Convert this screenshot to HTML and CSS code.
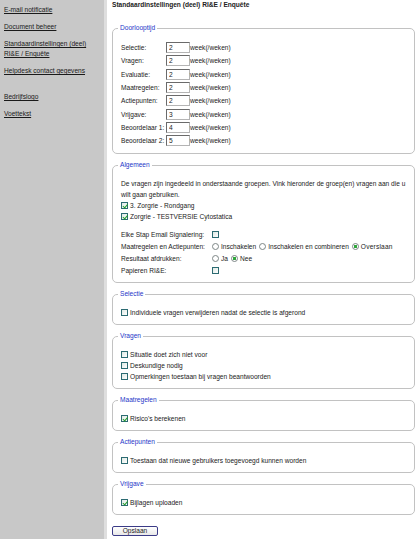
FILE: index.html
```html
<!DOCTYPE html>
<html lang="nl">
<head>
  <meta charset="UTF-8">
  <title>Standaardinstellingen (deel) RI&amp;E / Enquête</title>
  <link rel="stylesheet" href="styles.css">
</head>
<body>
  <div class="page">

    <!-- Menu links -->
    <nav class="sidebar">
      <a href="#">E-mail notificatie</a>
      <a href="#">Document beheer</a>
      <a href="#">Standaardinstellingen (deel) RI&amp;E / Enquête</a>
      <a href="#">Helpdesk contact gegevens</a>
      <a href="#" class="spaced">Bedrijfslogo</a>
      <a href="#">Voettekst</a>
    </nav>

    <main class="content">
      <h1 class="title">Standaardinstellingen (deel) RI&amp;E / Enquête</h1>

      <form>
        <fieldset class="box">
          <legend>Doorlooptijd</legend>
          <div class="term-grid">
            <label>Selectie:</label><input class="term" type="text" value="2"><span>week(/weken)</span>
            <label>Vragen:</label><input class="term" type="text" value="2"><span>week(/weken)</span>
            <label>Evaluatie:</label><input class="term" type="text" value="2"><span>week(/weken)</span>
            <label>Maatregelen:</label><input class="term" type="text" value="2"><span>week(/weken)</span>
            <label>Actiepunten:</label><input class="term" type="text" value="2"><span>week(/weken)</span>
            <label>Vrijgave:</label><input class="term" type="text" value="3"><span>week(/weken)</span>
            <label>Beoordelaar 1:</label><input class="term" type="text" value="4"><span>week(/weken)</span>
            <label>Beoordelaar 2:</label><input class="term" type="text" value="5"><span>week(/weken)</span>
          </div>
        </fieldset>

        <fieldset class="box">
          <legend>Algemeen</legend>
          <p class="intro">De vragen zijn ingedeeld in onderstaande groepen. Vink hieronder de groep(en) vragen aan die u wilt gaan gebruiken.</p>
          <label class="check-row"><input type="checkbox" checked>3. Zorgrie - Rondgang</label>
          <label class="check-row"><input type="checkbox" checked>Zorgrie - TESTVERSIE Cytostatica</label>

          <div class="settings">
            <span>Elke Stap Email Signalering:</span>
            <span><input type="checkbox"></span>

            <span>Maatregelen en Actiepunten:</span>
            <span class="choices">
              <label><input type="radio" name="ma">Inschakelen</label>
              <label><input type="radio" name="ma">Inschakelen en combineren</label>
              <label class="wide"><input type="radio" name="ma" checked>Overslaan</label>
            </span>

            <span>Resultaat afdrukken:</span>
            <span class="choices">
              <label><input type="radio" name="print">Ja</label>
              <label><input type="radio" name="print" checked>Nee</label>
            </span>

            <span>Papieren RI&amp;E:</span>
            <span><input type="checkbox"></span>
          </div>
        </fieldset>

        <fieldset class="box">
          <legend>Selectie</legend>
          <label class="check-row"><input type="checkbox">Individuele vragen verwijderen nadat de selectie is afgerond</label>
        </fieldset>

        <fieldset class="box">
          <legend>Vragen</legend>
          <label class="check-row"><input type="checkbox">Situatie doet zich niet voor</label>
          <label class="check-row"><input type="checkbox">Deskundige nodig</label>
          <label class="check-row"><input type="checkbox">Opmerkingen toestaan bij vragen beantwoorden</label>
        </fieldset>

        <fieldset class="box">
          <legend>Maatregelen</legend>
          <label class="check-row"><input type="checkbox" checked>Risico's berekenen</label>
        </fieldset>

        <fieldset class="box">
          <legend>Actiepunten</legend>
          <label class="check-row"><input type="checkbox">Toestaan dat nieuwe gebruikers toegevoegd kunnen worden</label>
        </fieldset>

        <fieldset class="box">
          <legend>Vrijgave</legend>
          <label class="check-row"><input type="checkbox" checked>Bijlagen uploaden</label>
        </fieldset>

        <button type="button" class="save">Opslaan</button>
      </form>
    </main>
  </div>
</body>
</html>
```

FILE: styles.css
```css
* { box-sizing: border-box; }
html, body {
  margin: 0;
  padding: 0;
  height: 100%;
}
body {
  font-family: "Liberation Sans", Arial, sans-serif;
  font-size: 6.6px;
  color: #222;
  background: #fff;
}

.page {
  display: flex;
  min-height: 100vh;
}

/* Menu links */
.sidebar {
  flex: none;
  width: 107px;
  background: #c8c8c8;
  border-right: 3px solid #dedede;
  padding: 5px 4px 0 4px;
  display: flex;
  flex-direction: column;
  align-items: flex-start;
}
.sidebar a {
  color: #1a1a1a;
  line-height: 10px;
  margin-bottom: 7px;
}
.sidebar a.spaced {
  margin-top: 9px;
}

.content {
  flex: 1;
  padding: 0 2px 0 5px;
}
.title {
  font-size: 6.6px;
  font-weight: bold;
  line-height: 10px;
  margin: 0 0 14px;
}

/* Fieldsets */
.box {
  margin: 0 0 7px;
  padding: 9px 8px 6px 8px;
  border: 1px solid #c2c2c2;
  border-radius: 5px;
  min-width: 0;
}
.box legend {
  color: #2536c8;
  line-height: 8px;
  padding: 0 2px;
  margin-left: -3px;
}

.term-grid {
  display: grid;
  grid-template-columns: 45px 24px auto;
  grid-auto-rows: 13.3px;
  align-items: center;
}
.term {
  width: 24px;
  height: 11px;
  font: inherit;
  padding: 0 2px;
  border: 1px solid #b4b4b4;
  border-top-color: #6a6a6a;
  border-left-color: #6a6a6a;
  color: #222;
}

.intro {
  margin: 0;
  line-height: 11px;
}
.check-row {
  display: flex;
  align-items: center;
  height: 11px;
}

.settings {
  display: grid;
  grid-template-columns: 91px auto;
  grid-auto-rows: 12px;
  align-items: center;
  margin-top: 6px;
}
.settings > span {
  display: flex;
  align-items: center;
}
.choices label {
  display: inline-flex;
  align-items: center;
  margin-right: 3px;
}
.choices .wide {
  letter-spacing: 0.2px;
}

/* Checkbox en radio in oude stijl */
input[type="checkbox"] {
  appearance: none;
  -webkit-appearance: none;
  position: relative;
  flex: none;
  width: 7px;
  height: 7px;
  margin: 0 2px 0 0;
  border: 1px solid #2c6b72;
  background: linear-gradient(135deg, #dfe9e4, #fff);
}
input[type="checkbox"]:checked::after {
  content: '';
  position: absolute;
  left: 1.5px;
  top: 0;
  width: 1.5px;
  height: 3.5px;
  border-right: 1.2px solid #1f9a2a;
  border-bottom: 1.2px solid #1f9a2a;
  transform: rotate(40deg);
}
input[type="radio"] {
  appearance: none;
  -webkit-appearance: none;
  flex: none;
  width: 7px;
  height: 7px;
  margin: 0 2px 0 0;
  border: 1px solid #7d8686;
  border-radius: 50%;
  background: #fff;
}
input[type="radio"]:checked {
  background: radial-gradient(circle, #2ea53a 0 1.4px, #fff 1.9px);
}

.save {
  display: block;
  width: 46px;
  height: 10px;
  margin-top: 11px;
  padding: 0;
  font: inherit;
  line-height: 8px;
  color: #222;
  border: 1px solid #3b3b87;
  border-radius: 2px;
  background: linear-gradient(#fff, #e8e8e8);
}
```
